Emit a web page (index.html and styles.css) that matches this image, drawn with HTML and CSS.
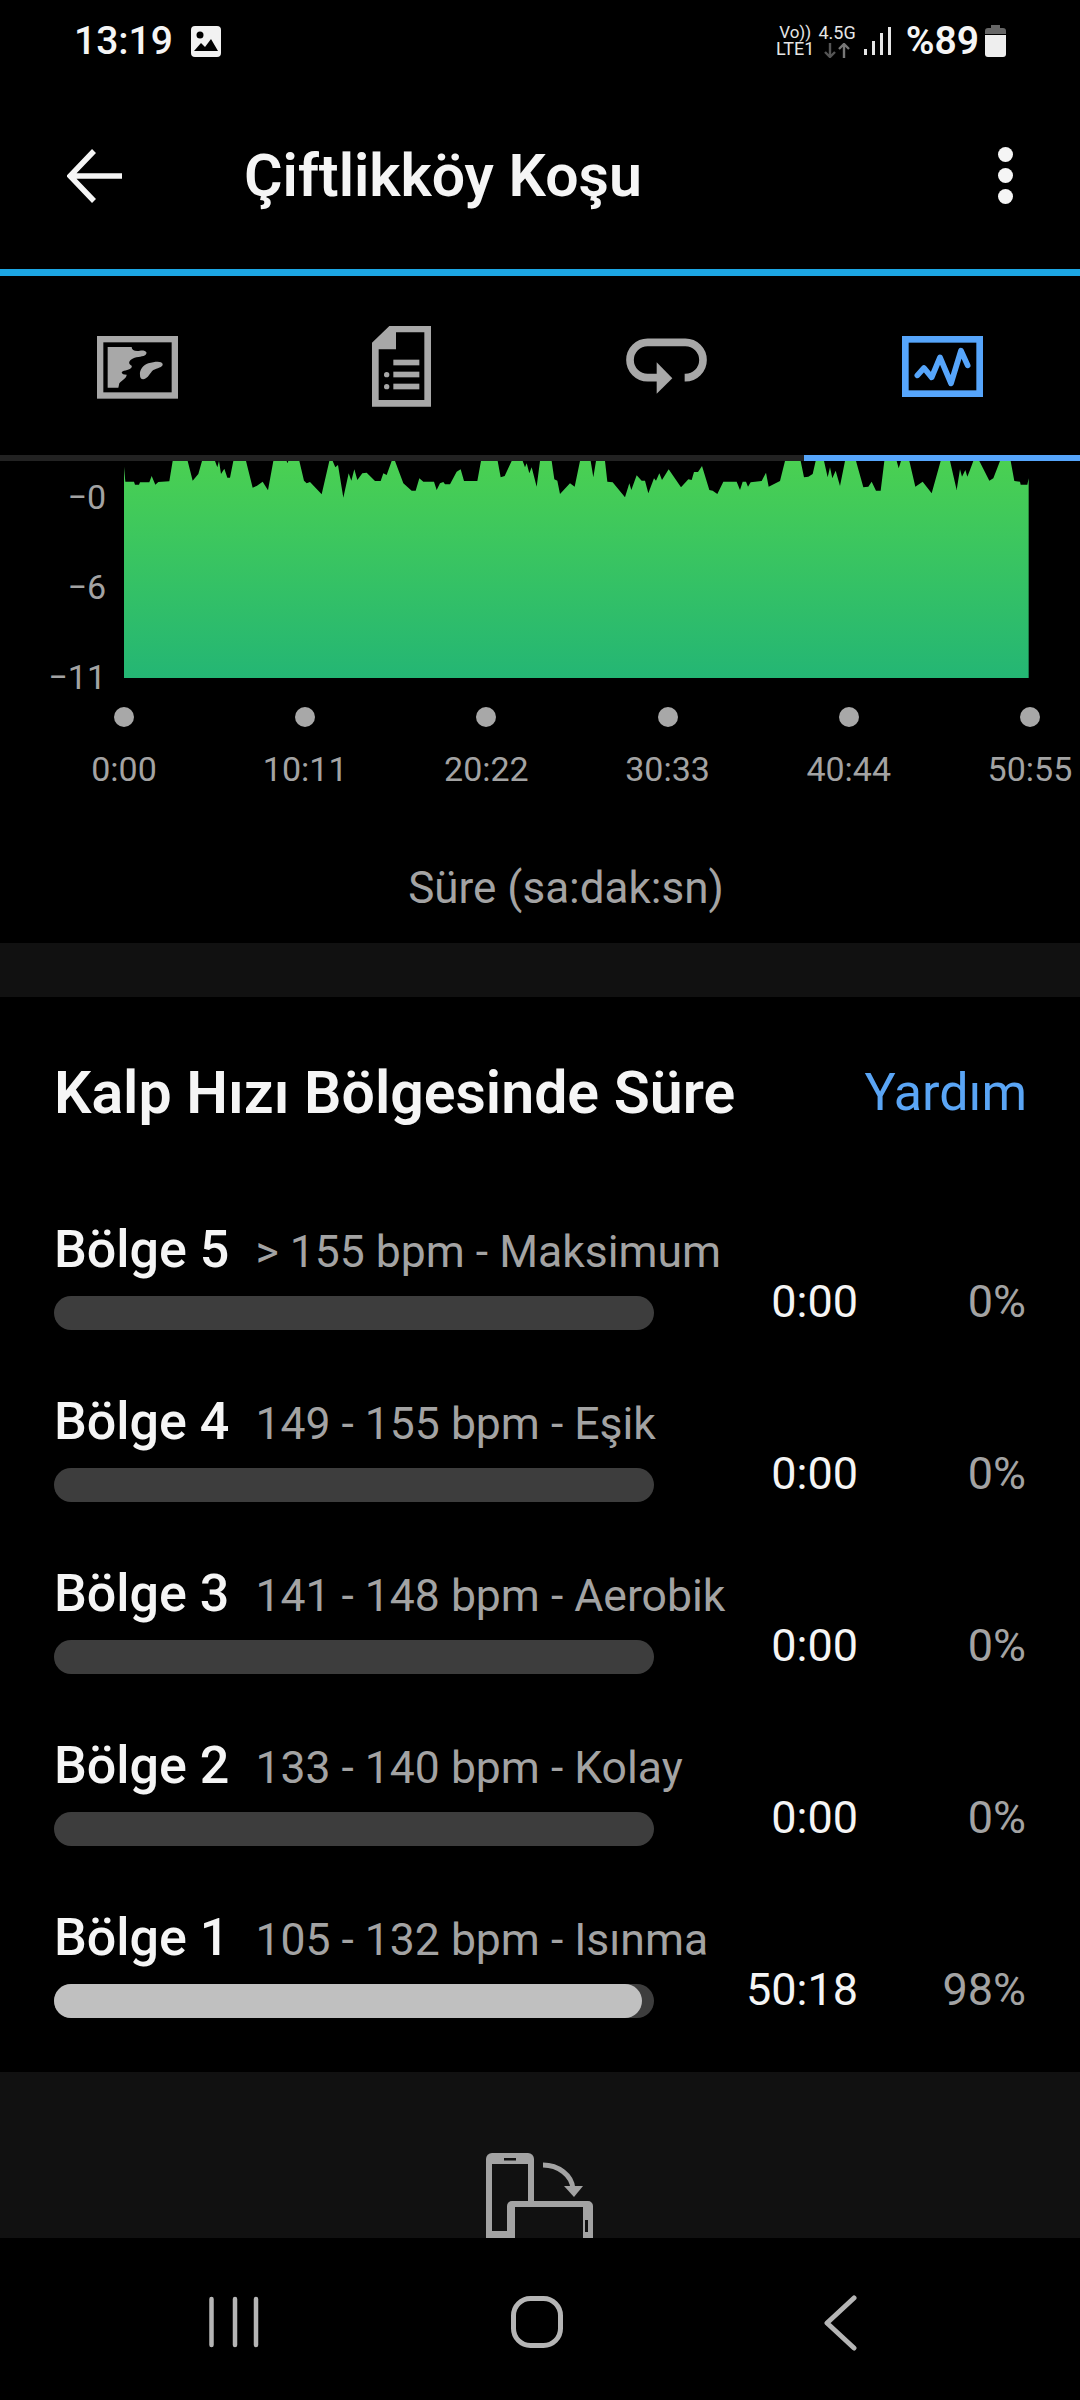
FILE: index.html
```html
<!DOCTYPE html>
<html lang="tr">
<head>
  <meta charset="UTF-8">
  <meta name="viewport" content="width=device-width, initial-scale=1.0">
  <title>Çiftlikköy Koşu</title>
  <link rel="stylesheet" href="styles.css">
</head>
<body>
  <div class="status">
    <span class="clock">13:19</span>
    <svg class="gallery" width="30" height="31" viewBox="0 0 30 31">
      <path fill-rule="evenodd" fill="#f2f2f2" d="M4 0H26A4 4 0 0 1 30 4V27A4 4 0 0 1 26 31H4A4 4 0 0 1 0 27V4A4 4 0 0 1 4 0ZM3 25H27L20 13L14 21L10 17Z"/>
      <circle cx="9" cy="9" r="3.5" fill="#000"/>
    </svg>
    <div class="status-right">
      <div class="net net-volte"><span>Vo))</span><span class="lte">LTE1</span></div>
      <div class="net net-data">
        <span>4.5G</span>
        <svg width="26" height="15" viewBox="0 0 26 15" fill="none" stroke-width="2.4">
          <path stroke="#555" d="M6 0V14M1 9L6 14L11 9"/>
          <path stroke="#777" d="M20 15V1M15 6L20 1L25 6"/>
        </svg>
      </div>
      <svg class="signal" width="27" height="28" viewBox="0 0 27 28" fill="#e6e6e6">
        <rect x="0" y="22" width="3" height="6"/>
        <rect x="8" y="14" width="3" height="14"/>
        <rect x="16" y="6" width="3" height="22"/>
        <rect x="24" y="0" width="3" height="28"/>
      </svg>
      <span class="battery-text">%89</span>
      <svg width="21" height="32" viewBox="0 0 21 32">
        <path fill="#666" d="M6 0H15V3H18A3 3 0 0 1 21 6V9H0V6A3 3 0 0 1 3 3H6Z"/>
        <path fill="#eee" d="M0 10H21V29A3 3 0 0 1 18 32H3A3 3 0 0 1 0 29Z"/>
      </svg>
    </div>
  </div>

  <header class="toolbar">
    <svg class="back" width="56" height="56" viewBox="0 0 56 56" fill="none" stroke="#f5f5f5" stroke-width="5.5">
      <path d="M55 28H5M27 3L3 28L27 53"/>
    </svg>
    <h1>Çiftlikköy Koşu</h1>
    <div class="menu"><i></i><i></i><i></i></div>
  </header>
  <div class="rule"></div>

  <nav class="tabs">
    <div class="tab">
      <svg width="90" height="90" viewBox="96 63 270 270">
        <rect x="120.5" y="117.5" width="224" height="169" fill="none" stroke="#a8a8a8" stroke-width="19"/>
        <path fill="#a8a8a8" d="M143 141L215 141C215 150 225 155 240 152C258 150 265 158 255 166C245 172 225 170 215 178C205 185 205 192 215 197C218 205 205 210 192 212C182 215 182 223 200 224C200 235 185 240 178 250L175 263L143 263Z"/>
        <path fill="#a8a8a8" d="M240 225C238 210 250 195 265 190C285 184 305 182 308 192C310 202 290 205 280 210C270 218 265 235 250 238C242 238 240 232 240 225Z"/>
      </svg>
    </div>
    <div class="tab">
      <svg width="90" height="90" viewBox="888 63 270 270" fill="#a8a8a8">
        <path fill-rule="evenodd" d="M988 78H1113V320H936V128ZM1008 97V148H956V300H1093V97Z"/>
        <rect x="1000" y="179" width="78" height="17"/>
        <rect x="1000" y="215" width="78" height="17"/>
        <rect x="1000" y="251" width="78" height="17"/>
        <circle cx="980" cy="224" r="8"/>
        <circle cx="980" cy="260" r="8"/>
      </svg>
    </div>
    <div class="tab">
      <svg width="90" height="90" viewBox="126 63 270 270">
        <path fill="none" stroke="#a8a8a8" stroke-width="23" d="M317 233H319A53 53 0 0 0 319 127H206A53 53 0 0 0 206 233H240"/>
        <path fill="#a8a8a8" d="M233 187L280 235L233 281Z"/>
      </svg>
    </div>
    <div class="tab active">
      <svg width="90" height="90" viewBox="951 63 270 270" fill="none" stroke="#56a5fb">
        <rect x="976" y="118" width="223" height="163" stroke-width="20"/>
        <path stroke-width="17" stroke-linecap="round" stroke-linejoin="round" d="M1012 226L1032 204L1055 232L1080 172L1113 250L1143 152L1163 196"/>
      </svg>
    </div>
  </nav>

  <section class="chart">
    <div class="plot">
      <div class="y-axis">
        <span>−0</span>
        <span>−6</span>
        <span>−11</span>
      </div>
      <svg class="area" width="905" height="217" viewBox="42 33 2715 651">
        <defs>
          <linearGradient id="hr" x1="0" y1="33" x2="0" y2="684" gradientUnits="userSpaceOnUse">
            <stop offset="0" stop-color="#4ad052"/>
            <stop offset="1" stop-color="#24b674"/>
          </linearGradient>
        </defs>
        <polygon fill="url(#hr)" points="42,50 46,95 72,95 75,104 87,104 90,97 118,97 125,78 136,104 145,96 178,94 188,33 233,33 248,92 265,72 276,33 315,33 322,52 327,33 333,72 343,56 352,83 360,83 370,33 408,33 428,113 440,108 458,95 474,121 490,33 530,33 532,40 535,33 568,33 582,92 590,100 600,96 635,133 658,33 668,33 676,52 684,45 700,143 716,70 724,92 733,58 742,90 757,70 770,68 795,93 812,93 820,70 830,75 845,33 855,33 880,100 905,122 917,122 928,85 940,95 972,95 980,120 990,100 1000,96 1005,103 1020,103 1040,65 1052,58 1062,93 1102,93 1113,33 1163,33 1172,82 1184,78 1205,33 1238,33 1245,52 1250,40 1258,70 1265,52 1280,110 1290,33 1325,33 1333,88 1342,92 1350,132 1380,100 1394,110 1410,33 1442,33 1450,82 1458,33 1485,33 1492,95 1508,97 1545,142 1558,100 1564,120 1580,76 1595,92 1605,92 1615,130 1632,85 1638,92 1648,70 1656,90 1676,58 1713,112 1735,88 1745,90 1752,66 1764,66 1776,48 1798,120 1808,122 1822,132 1840,95 1880,95 1890,120 1898,95 1908,95 1914,110 1922,97 1955,93 1968,68 1976,110 2010,93 2025,33 2072,33 2082,82 2095,80 2108,72 2117,33 2142,33 2153,82 2160,52 2167,85 2177,62 2190,108 2205,33 2238,33 2260,112 2275,110 2285,95 2298,122 2312,122 2323,33 2360,33 2366,55 2373,33 2398,33 2416,110 2438,95 2465,130 2492,33 2520,33 2540,120 2550,58 2556,80 2566,60 2572,80 2580,60 2590,33 2608,33 2638,92 2650,85 2670,33 2702,33 2713,93 2730,95 2732,104 2752,104 2756,85 2756,684 42,684"/>
      </svg>
    </div>
    <div class="x-axis">
      <div class="tick"><i></i><span>0:00</span></div>
      <div class="tick"><i></i><span>10:11</span></div>
      <div class="tick"><i></i><span>20:22</span></div>
      <div class="tick"><i></i><span>30:33</span></div>
      <div class="tick"><i></i><span>40:44</span></div>
      <div class="tick"><i></i><span>50:55</span></div>
    </div>
    <p class="axis-title">Süre (sa:dak:sn)</p>
  </section>

  <div class="band"></div>

  <section class="zones">
    <div class="zones-head">
      <h2>Kalp Hızı Bölgesinde Süre</h2>
      <a class="help">Yardım</a>
    </div>

    <div class="zone">
      <div class="zone-main">
        <div class="zone-label"><b>Bölge 5</b><span>&gt; 155 bpm - Maksimum</span></div>
        <div class="bar"></div>
      </div>
      <div class="zone-time">0:00</div>
      <div class="zone-pct">0%</div>
    </div>
    <div class="zone">
      <div class="zone-main">
        <div class="zone-label"><b>Bölge 4</b><span>149 - 155 bpm - Eşik</span></div>
        <div class="bar"></div>
      </div>
      <div class="zone-time">0:00</div>
      <div class="zone-pct">0%</div>
    </div>
    <div class="zone">
      <div class="zone-main">
        <div class="zone-label"><b>Bölge 3</b><span>141 - 148 bpm - Aerobik</span></div>
        <div class="bar"></div>
      </div>
      <div class="zone-time">0:00</div>
      <div class="zone-pct">0%</div>
    </div>
    <div class="zone">
      <div class="zone-main">
        <div class="zone-label"><b>Bölge 2</b><span>133 - 140 bpm - Kolay</span></div>
        <div class="bar"></div>
      </div>
      <div class="zone-time">0:00</div>
      <div class="zone-pct">0%</div>
    </div>
    <div class="zone">
      <div class="zone-main">
        <div class="zone-label"><b>Bölge 1</b><span>105 - 132 bpm - Isınma</span></div>
        <div class="bar"><div class="bar-fill" style="width: 98%"></div></div>
      </div>
      <div class="zone-time">50:18</div>
      <div class="zone-pct">98%</div>
    </div>
  </section>

  <div class="rotate-hint">
    <svg width="108" height="85" viewBox="0 0 108 85">
      <rect width="48" height="95" rx="6" fill="#a3a3a3"/>
      <rect x="6" y="11" width="36" height="67" fill="#111"/>
      <rect x="18" y="5" width="12" height="2.5" fill="#111"/>
      <rect x="21" y="48" width="86" height="60" rx="5" fill="#a3a3a3"/>
      <rect x="29" y="54" width="68" height="60" fill="#111"/>
      <rect x="99" y="67" width="3" height="12" fill="#111"/>
      <path d="M57 12C72 12 86 22 87 36" fill="none" stroke="#a3a3a3" stroke-width="5"/>
      <path d="M78 33H97L88 44Z" fill="#a3a3a3"/>
    </svg>
  </div>

  <footer class="navbar">
    <svg width="60" height="56" viewBox="0 0 60 56" stroke="#b5b5b5" stroke-width="4.5" stroke-linecap="round">
      <path d="M8.5 4V50M32 4V50M53 4V50"/>
    </svg>
    <svg width="60" height="56" viewBox="0 0 60 56" fill="none" stroke="#b5b5b5" stroke-width="5">
      <rect x="6.5" y="3.5" width="47" height="47" rx="17"/>
    </svg>
    <svg width="60" height="56" viewBox="0 0 60 56" fill="none" stroke="#b5b5b5" stroke-width="5" stroke-linecap="round" stroke-linejoin="round">
      <path d="M43 3L16 28L43 53"/>
    </svg>
  </footer>
</body>
</html>
```

FILE: styles.css
```css
* {
  box-sizing: border-box;
}

html, body {
  margin: 0;
  background: #000;
}

body {
  width: 1080px;
  height: 2400px;
  overflow: hidden;
  font-family: Roboto, "Noto Sans", sans-serif;
  color: #f5f5f5;
}

svg {
  display: block;
}

/* status bar */
.status {
  height: 80px;
  display: flex;
  align-items: center;
  padding: 2px 74px 0 74px;
}

.clock {
  font-size: 39px;
  font-weight: 500;
  line-height: 44px;
}

.gallery {
  margin-left: 18px;
}

.status-right {
  margin-left: auto;
  display: flex;
  align-items: center;
}

.net {
  display: flex;
  flex-direction: column;
  align-items: center;
  font-size: 17px;
  line-height: 16px;
  color: #e6e6e6;
}

.net-volte .lte {
  font-size: 18px;
  line-height: 18px;
}

.net-data {
  margin-left: 4px;
  font-size: 18px;
  gap: 2px;
}

.signal {
  margin-left: 8px;
}

.battery-text {
  margin: 0 6px 0 15px;
  font-size: 39px;
  font-weight: 600;
  line-height: 44px;
}

/* toolbar and tabs */
.toolbar {
  height: 189px;
  display: flex;
  align-items: center;
  padding: 2px 67px 0;
}

.toolbar h1 {
  margin: 0 0 0 121px;
  font-size: 59px;
  font-weight: 600;
  line-height: 70px;
}

.menu {
  margin-left: auto;
  display: flex;
  flex-direction: column;
  gap: 6px;
}

.menu i {
  width: 15px;
  height: 15px;
  border-radius: 50%;
  background: #f5f5f5;
}

.rule {
  height: 7px;
  background: #1ca6e3;
}

.tabs {
  display: grid;
  grid-template-columns: 274px 254px 276px 276px;
}

.tab {
  height: 185px;
  padding-top: 1px;
  display: flex;
  align-items: center;
  justify-content: center;
  border-bottom: 6px solid #222;
}

.tab.active {
  border-bottom-color: #56a5fb;
}

/* chart */
.plot {
  height: 235px;
  display: flex;
}

.y-axis {
  width: 124px;
  padding: 16px 18px 0 0;
  display: flex;
  flex-direction: column;
  gap: 50px;
  text-align: right;
  font-size: 34px;
  line-height: 40px;
  color: #a3a3a3;
}

.x-axis {
  width: 1026px;
  margin: 11px 0 0 64px;
  display: flex;
  justify-content: space-between;
}

.tick {
  width: 120px;
  display: flex;
  flex-direction: column;
  align-items: center;
  gap: 22px;
  font-size: 34px;
  line-height: 40px;
  color: #a3a3a3;
}

.tick i {
  width: 20px;
  height: 20px;
  border-radius: 50%;
  background: #a8a8a8;
}

.axis-title {
  margin: 74px 0 30px;
  padding-left: 52px;
  text-align: center;
  font-size: 44px;
  line-height: 50px;
  color: #a3a3a3;
}

.band {
  height: 54px;
  background: #111;
}

/* heart rate zones */
.zones {
  padding: 66px 0 54px 54px;
}

.zones-head {
  display: flex;
  justify-content: space-between;
  align-items: center;
  padding: 0 53px 35px 0;
}

.zones-head h2 {
  margin: 0;
  font-size: 59px;
  font-weight: 600;
  line-height: 60px;
}

.help {
  font-size: 52px;
  line-height: 60px;
  color: #5aa5f5;
}

.zone {
  display: grid;
  grid-template-columns: 600px 204px 168px;
  align-items: end;
  margin-top: 54px;
}

.zone-label {
  display: flex;
  align-items: baseline;
  gap: 26px;
  height: 72px;
  padding-top: 4px;
  margin-bottom: 12px;
  white-space: nowrap;
  line-height: 68px;
}

.zone-label b {
  font-size: 52px;
  font-weight: 500;
}

.zone-label span {
  font-size: 44.5px;
  color: #a3a3a3;
}

.bar {
  height: 34px;
  border-radius: 17px;
  background: #3d3d3d;
}

.bar-fill {
  height: 100%;
  border-radius: 17px;
  background: #c0c0c0;
}

.zone-time, .zone-pct {
  text-align: right;
  font-size: 45px;
  line-height: 57px;
}

.zone-pct {
  color: #a3a3a3;
}

.rotate-hint {
  height: 166px;
  padding-top: 81px;
  display: flex;
  justify-content: center;
  overflow: hidden;
  background: #111;
}

.navbar {
  height: 162px;
  padding: 57px 6px 0 0;
  display: grid;
  grid-template-columns: repeat(3, 304px);
  justify-content: center;
  justify-items: center;
  align-items: start;
}
```
